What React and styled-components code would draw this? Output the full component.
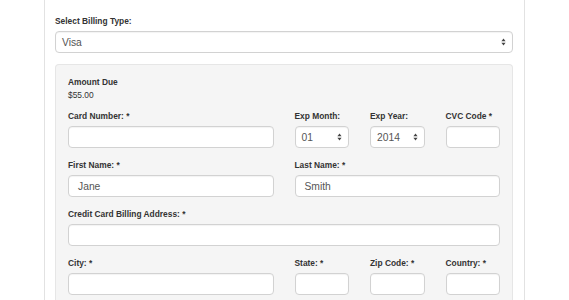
import React from 'react';
import styled, { createGlobalStyle } from 'styled-components';

const GlobalStyle = createGlobalStyle`
    html, body {
        margin: 0;
        padding: 0;
        background: #ffffff;
    }
    body {
        font-family: "Liberation Sans", Arial, Helvetica, sans-serif;
        color: #333333;
    }
`;

const Page = styled.div`
    width: 569px;
    height: 300px;
    overflow: hidden;
`;

const Card = styled.div`
    margin-left: 44px;
    width: 481px;
    min-height: 300px;
    box-sizing: border-box;
    border-left: 1px solid #e2e2e2;
    border-right: 1px solid #e2e2e2;
    padding: 15px 11px 0 10px;
`;

const Label = styled.label`
    display: block;
    font-size: 8.4px;
    font-weight: bold;
    line-height: 12px;
    margin-bottom: 4px;
    white-space: nowrap;
`;

const Group = styled.div`
    grid-column: span ${({ span }) => span || 12};
    margin-bottom: ${({ last }) => (last ? 0 : 11)}px;
`;

const fieldBase = `
    box-sizing: border-box;
    width: 100%;
    height: 22px;
    background: #ffffff;
    border: 1px solid #d2d2d2;
    border-radius: 4px;
    box-shadow: inset 0 1px 1px rgba(0, 0, 0, 0.05);
    font-family: "Liberation Sans", Arial, Helvetica, sans-serif;
    font-size: 10.3px;
    color: #555555;
    display: flex;
    align-items: center;
`;

const Input = styled.div`
    ${fieldBase}
    padding: 0 9px;
`;

const SelectBox = styled.div`
    ${fieldBase}
    padding: 0 6px;
    justify-content: space-between;
`;

const Well = styled.div`
    margin-top: 11px;
    background: #f5f5f5;
    border: 1px solid #e6e6e6;
    border-bottom: none;
    border-radius: 4px 4px 0 0;
    padding: 11px 12px 20px 12px;
`;

const Amount = styled.div`
    font-size: 8.4px;
    line-height: 13px;
    margin-bottom: 8px;
`;

const AmountTitle = styled.div`
    font-weight: bold;
`;

const Row = styled.div`
    display: grid;
    grid-template-columns: repeat(12, 1fr);
    column-gap: 21px;
`;

const Arrows = () => (
    <svg width="5" height="8" viewBox="0 0 5 8">
        <path d="M2.5 0.5 L4.6 3.2 L0.4 3.2 Z" fill="#444" />
        <path d="M2.5 7.5 L4.6 4.8 L0.4 4.8 Z" fill="#444" />
    </svg>
);

const Select = ({ value }) => (
    <SelectBox>
        <span>{value}</span>
        <Arrows />
    </SelectBox>
);

const Field = ({ label, span, value, select, last }) => (
    <Group span={span} last={last}>
        <Label>{label}</Label>
        {select ? <Select value={value} /> : <Input>{value}</Input>}
    </Group>
);

export default function App() {
    return (
        <Page>
            <GlobalStyle />
            <Card>
                <Label>Select Billing Type:</Label>
                <Select value="Visa" />
                <Well>
                    <Amount>
                        <AmountTitle>Amount Due</AmountTitle>
                        <div>$55.00</div>
                    </Amount>
                    <Row>
                        <Field label="Card Number: *" span={6} />
                        <Field label="Exp Month:" span={2} value="01" select />
                        <Field label="Exp Year:" span={2} value="2014" select />
                        <Field label="CVC Code *" span={2} />
                    </Row>
                    <Row>
                        <Field label="First Name: *" span={6} value="Jane" />
                        <Field label="Last Name: *" span={6} value="Smith" />
                    </Row>
                    <Row>
                        <Field label="Credit Card Billing Address: *" span={12} />
                    </Row>
                    <Row>
                        <Field label="City: *" span={6} last />
                        <Field label="State: *" span={2} last />
                        <Field label="Zip Code: *" span={2} last />
                        <Field label="Country: *" span={2} last />
                    </Row>
                </Well>
            </Card>
        </Page>
    );
}
